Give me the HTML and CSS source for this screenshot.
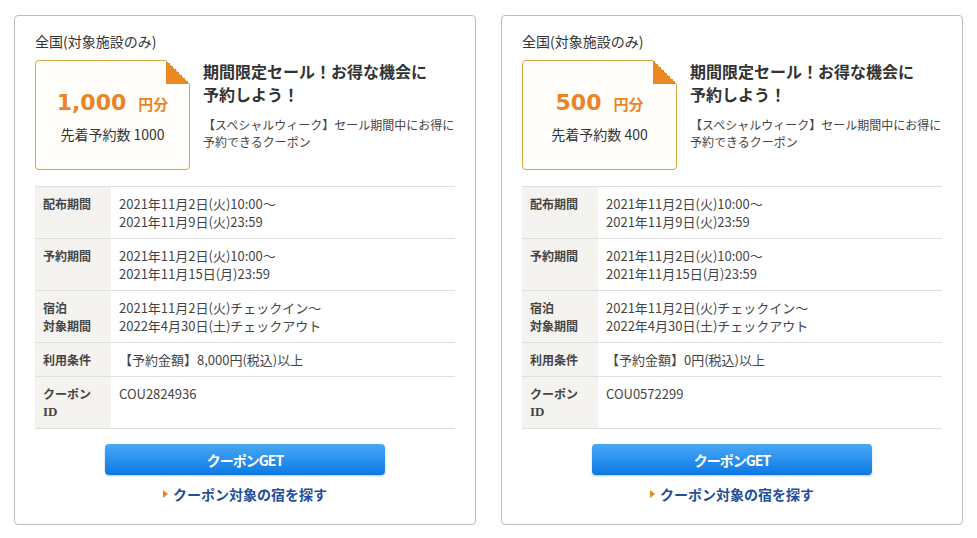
FILE: index.html
```html
<!DOCTYPE html>
<html lang="ja">
<head>
  <meta charset="UTF-8" />
  <meta name="viewport" content="width=device-width, initial-scale=1.0"/>
  <title>クーポン</title>
  <link rel="stylesheet" href="styles.css">
</head>
<body>

  <div class="coupon-list">

    <div class="coupon-card">
      <div class="area">全国(対象施設のみ)</div>
      <div class="coupon-head">
        <div class="ticket">
          <div class="ticket-amount">1,000<span class="ticket-unit">円分</span></div>
          <div class="ticket-count">先着予約数 1000</div>
        </div>
        <div class="coupon-text">
          <div class="coupon-title">期間限定セール！お得な機会に<br>予約しよう！</div>
          <div class="coupon-desc">【スペシャルウィーク】セール期間中にお得に予約できるクーポン</div>
        </div>
      </div>
      <table class="coupon-info">
        <tr><th>配布期間</th><td>2021年11月2日(火)10:00～<br>2021年11月9日(火)23:59</td></tr>
        <tr><th>予約期間</th><td>2021年11月2日(火)10:00～<br>2021年11月15日(月)23:59</td></tr>
        <tr><th>宿泊<br>対象期間</th><td>2021年11月2日(火)チェックイン～<br>2022年4月30日(土)チェックアウト</td></tr>
        <tr><th>利用条件</th><td>【予約金額】8,000円(税込)以上</td></tr>
        <tr><th>クーポン<br><span class="id-text">ID</span></th><td>COU2824936</td></tr>
      </table>
      <button class="get-btn">クーポンGET</button>
      <a class="search-link" href="#">クーポン対象の宿を探す</a>
    </div>

    <div class="coupon-card">
      <div class="area">全国(対象施設のみ)</div>
      <div class="coupon-head">
        <div class="ticket">
          <div class="ticket-amount">500<span class="ticket-unit">円分</span></div>
          <div class="ticket-count">先着予約数 400</div>
        </div>
        <div class="coupon-text">
          <div class="coupon-title">期間限定セール！お得な機会に<br>予約しよう！</div>
          <div class="coupon-desc">【スペシャルウィーク】セール期間中にお得に予約できるクーポン</div>
        </div>
      </div>
      <table class="coupon-info">
        <tr><th>配布期間</th><td>2021年11月2日(火)10:00～<br>2021年11月9日(火)23:59</td></tr>
        <tr><th>予約期間</th><td>2021年11月2日(火)10:00～<br>2021年11月15日(月)23:59</td></tr>
        <tr><th>宿泊<br>対象期間</th><td>2021年11月2日(火)チェックイン～<br>2022年4月30日(土)チェックアウト</td></tr>
        <tr><th>利用条件</th><td>【予約金額】0円(税込)以上</td></tr>
        <tr><th>クーポン<br><span class="id-text">ID</span></th><td>COU0572299</td></tr>
      </table>
      <button class="get-btn">クーポンGET</button>
      <a class="search-link" href="#">クーポン対象の宿を探す</a>
    </div>

  </div>

</body>
</html>
```

FILE: styles.css
```css
body {
  font-family: 'Noto Sans CJK JP', 'Noto Sans', sans-serif;
  background: #fff;
  color: #333;
  margin: 0;
  padding: 0;
}
.coupon-list {
  display: flex;
  gap: 25px;
  padding: 15px 14px;
}
.coupon-card {
  width: 421px;
  border: 1px solid #bdbdbd;
  border-radius: 4px;
  padding: 17px 20px 21px;
  display: flex;
  flex-direction: column;
  align-items: center;
}
.area {
  align-self: stretch;
  font-size: 14px;
  line-height: 16px;
  color: #333;
}
.coupon-head {
  align-self: stretch;
  display: flex;
  margin-top: 11px;
}
.ticket {
  position: relative;
  width: 153px;
  height: 108px;
  flex-shrink: 0;
  border: 1px solid #d9a544;
  border-radius: 4px;
  background: #fffefa;
  display: flex;
  flex-direction: column;
  align-items: center;
  justify-content: center;
}
.ticket::after {
  content: '';
  position: absolute;
  top: -1px;
  right: -1px;
  width: 24px;
  height: 24px;
  background: linear-gradient(to bottom left, #fff 50%, #e9891f 50%);
}
.ticket-amount {
  font-family: 'DejaVu Sans', sans-serif;
  font-size: 22px;
  font-weight: bold;
  line-height: 30px;
  color: #ea8426;
}
.ticket-unit {
  font-family: 'Noto Sans CJK JP', sans-serif;
  font-size: 15px;
  margin-left: 12px;
}
.ticket-count {
  font-size: 14px;
  line-height: 18px;
  margin-top: 6px;
  color: #333;
}
.coupon-text {
  margin-left: 13px;
}
.coupon-title {
  font-size: 16px;
  font-weight: bold;
  line-height: 23px;
  color: #333;
}
.coupon-desc {
  font-size: 12px;
  line-height: 17px;
  margin-top: 10px;
  color: #444;
}
.coupon-info {
  align-self: stretch;
  border-collapse: collapse;
  margin-top: 16px;
  font-size: 13px;
  line-height: 18px;
}
.coupon-info tr {
  border-top: 1px solid #dedede;
  border-bottom: 1px solid #dedede;
}
.coupon-info th {
  width: 60px;
  background: #f5f3ef;
  text-align: left;
  vertical-align: top;
  font-size: 12px;
  font-weight: bold;
  color: #444;
  padding: 8px 8px 7px;
}
.coupon-info td {
  vertical-align: top;
  color: #444;
  padding: 8px 8px 7px;
}
.id-text {
  font-family: 'Liberation Serif', serif;
  font-size: 13px;
  vertical-align: top;
}
.get-btn {
  margin-top: 15px;
  width: 280px;
  height: 31px;
  border: none;
  border-radius: 4px;
  background: linear-gradient(to bottom, #49a9f7, #0b78e2);
  box-shadow: 0 1px 2px rgba(0,0,0,0.25);
  color: #fff;
  font-family: 'Noto Sans CJK JP', sans-serif;
  font-size: 14px;
  font-weight: bold;
  letter-spacing: -1px;
  cursor: pointer;
}
.search-link {
  margin-top: 10px;
  font-size: 14px;
  font-weight: bold;
  line-height: 18px;
  color: #1f4f9c;
  text-decoration: none;
  display: flex;
  align-items: center;
}
.search-link::before {
  content: '';
  width: 0;
  height: 0;
  border-left: 5px solid #e8891f;
  border-top: 4px solid transparent;
  border-bottom: 4px solid transparent;
  margin-right: 5px;
}
```
